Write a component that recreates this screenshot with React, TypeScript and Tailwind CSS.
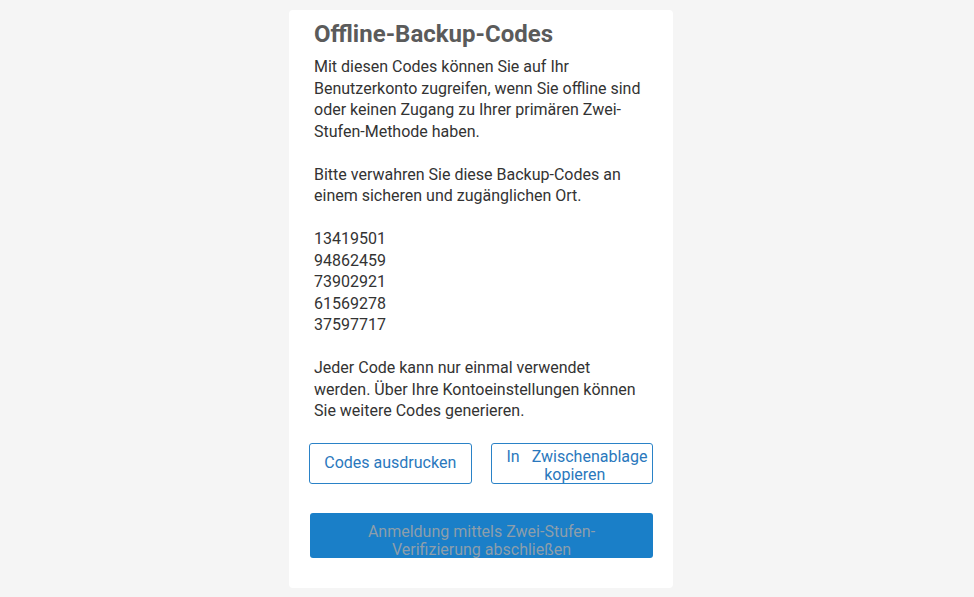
import React from "react";

export default function App() {
  const font = { fontFamily: '"Roboto", "Liberation Sans", sans-serif' };
  return (
    <div className="min-h-[597px] w-full bg-[#f5f5f5] flex justify-center pt-[10px] pr-[12px]" style={font}>
      <div className="w-[384px] h-[578px] bg-white rounded-[4px] pt-[6px] px-5 flex flex-col">
        <div className="px-[5px] text-[16px] leading-[21.5px] text-[#333333]">
          <h1 className="text-[24px] leading-[36px] font-bold text-[#5b5b5b] mb-[4px]">Offline-Backup-Codes</h1>
          <p>
            <span className="block">Mit diesen Codes können Sie auf Ihr</span>
            <span className="block">Benutzerkonto zugreifen, wenn Sie offline sind</span>
            <span className="block">oder keinen Zugang zu Ihrer primären Zwei-</span>
            <span className="block">Stufen-Methode haben.</span>
          </p>
          <p className="mt-[21.5px]">
            <span className="block">Bitte verwahren Sie diese Backup-Codes an</span>
            <span className="block">einem sicheren und zugänglichen Ort.</span>
          </p>
          <div className="mt-[21.5px]">
            <div>13419501</div>
            <div>94862459</div>
            <div>73902921</div>
            <div>61569278</div>
            <div>37597717</div>
          </div>
          <p className="mt-[21.5px]">
            <span className="block">Jeder Code kann nur einmal verwendet</span>
            <span className="block">werden. Über Ihre Kontoeinstellungen können</span>
            <span className="block">Sie weitere Codes generieren.</span>
          </p>
        </div>
        <div className="mt-[21px] flex gap-[19px]">
          <button className="w-[163px] h-[41px] border border-[#2a82c7] rounded-[3px] text-[16px] text-[#2a78bd] flex items-center justify-center">
            Codes ausdrucken
          </button>
          <button className="w-[163px] h-[41px] border border-[#2a82c7] rounded-[3px] text-[16px] leading-[18px] text-[#2a78bd] flex flex-col items-center pt-[4px] overflow-hidden">
            <span className="flex w-full pl-[15px] gap-[12px]">
              <span>In</span>
              <span>Zwischenablage</span>
            </span>
            <span className="pl-[6px]">kopieren</span>
          </button>
        </div>
        <button className="mt-[29px] ml-[1px] w-[343px] h-[45px] bg-[#1a7fc8] rounded-[3px] text-[16px] leading-[18px] text-[#8d9eab] pt-[10px] flex flex-col items-center overflow-hidden">
          <span>Anmeldung mittels Zwei-Stufen-</span>
          <span>Verifizierung abschließen</span>
        </button>
      </div>
    </div>
  );
}
